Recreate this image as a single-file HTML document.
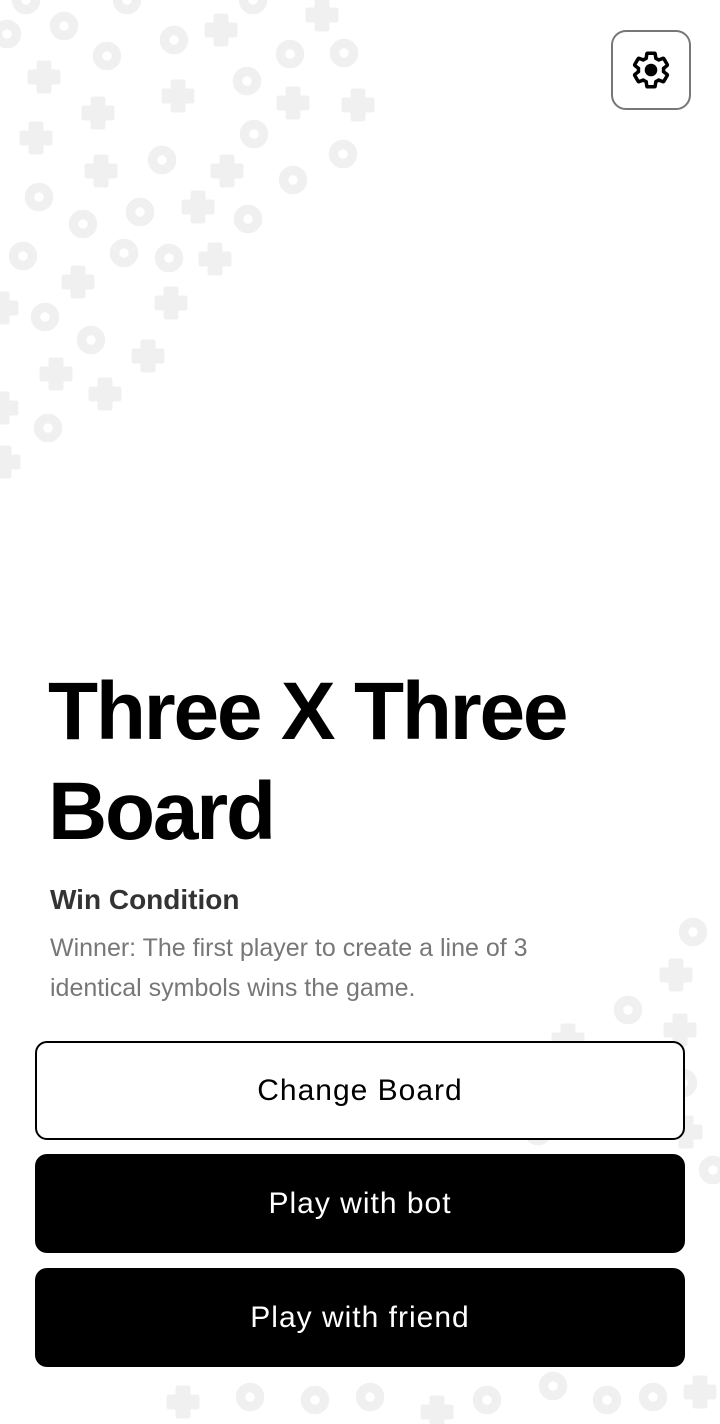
<!DOCTYPE html>
<html><head><meta charset="utf-8"><style>
html,body{margin:0;padding:0}
body{width:720px;height:1424px;position:relative;background:#fff;overflow:hidden;font-family:"Liberation Sans",sans-serif}
svg.bg{position:absolute;left:0;top:0}
.gear{position:absolute;left:611px;top:30px;width:76px;height:76px;border:2px solid #777;border-radius:15px;background:#fff;display:flex;align-items:center;justify-content:center}
h1{position:absolute;left:48px;top:662px;margin:0;font-size:82px;line-height:100px;font-weight:bold;letter-spacing:-2.2px;color:#000}
.wc{position:absolute;left:50px;top:884px;font-size:28px;font-weight:bold;color:#333}
.desc{position:absolute;left:50px;top:928px;width:545px;font-size:25px;line-height:40px;color:#777}
.btn{position:absolute;left:35px;width:650px;height:99px;border-radius:12px;box-sizing:border-box;display:flex;align-items:center;justify-content:center;font-size:30px;letter-spacing:1px}
.o{border:2px solid #000;background:#fff;color:#000}
.f{background:#000;color:#fff}
</style></head><body>
<svg class="bg" width="720" height="1424">
<defs>
<g id="r"><circle r="9.5" fill="none" stroke="#f0f0f0" stroke-width="9.5"/></g>
<g id="p"><path d="M-5,-15h10a1,1 0 0 1 1,1v8h8a1,1 0 0 1 1,1v10a1,1 0 0 1 -1,1h-8v8a1,1 0 0 1 -1,1h-10a1,1 0 0 1 -1,-1v-8h-8a1,1 0 0 1 -1,-1v-10a1,1 0 0 1 1,-1h8v-8a1,1 0 0 1 1,-1z" fill="#f0f0f0" stroke="#f0f0f0" stroke-width="3" stroke-linejoin="round"/></g>
</defs>
<g>
<use href="#r" x="26" y="0"/><use href="#r" x="127" y="0"/><use href="#r" x="253" y="0"/>
<use href="#r" x="7" y="34"/><use href="#r" x="64" y="26"/><use href="#r" x="107" y="56"/><use href="#r" x="174" y="40"/><use href="#r" x="290" y="54"/><use href="#r" x="344" y="53"/><use href="#r" x="247" y="81"/><use href="#r" x="254" y="134"/><use href="#r" x="343" y="154"/><use href="#r" x="162" y="160"/><use href="#r" x="39" y="197"/><use href="#r" x="83" y="224"/><use href="#r" x="140" y="212"/><use href="#r" x="293" y="180"/><use href="#r" x="248" y="219"/><use href="#r" x="23" y="256"/><use href="#r" x="124" y="253"/><use href="#r" x="169" y="258"/><use href="#r" x="45" y="317"/><use href="#r" x="91" y="340"/><use href="#r" x="48" y="428"/>
<use href="#p" x="44" y="77"/><use href="#p" x="221" y="30"/><use href="#p" x="322" y="15"/><use href="#p" x="178" y="96"/><use href="#p" x="98" y="113"/><use href="#p" x="36" y="138"/><use href="#p" x="293" y="103"/><use href="#p" x="358" y="105"/><use href="#p" x="101" y="171"/><use href="#p" x="227" y="171"/><use href="#p" x="198" y="207"/><use href="#p" x="215" y="259"/><use href="#p" x="78" y="282"/><use href="#p" x="171" y="303"/><use href="#p" x="148" y="356"/><use href="#p" x="56" y="374"/><use href="#p" x="105" y="394"/><use href="#p" x="2" y="308"/><use href="#p" x="2" y="408"/><use href="#p" x="4" y="462"/>
<use href="#r" x="693" y="932"/><use href="#r" x="628" y="1010"/><use href="#r" x="578" y="1093"/><use href="#r" x="538" y="1131"/><use href="#r" x="622" y="1120"/><use href="#r" x="683" y="1083"/><use href="#r" x="713" y="1170"/>
<use href="#r" x="250" y="1397"/><use href="#r" x="315" y="1400"/><use href="#r" x="370" y="1397"/><use href="#r" x="487" y="1400"/><use href="#r" x="553" y="1386"/><use href="#r" x="607" y="1400"/><use href="#r" x="653" y="1397"/>
<use href="#p" x="676" y="975"/><use href="#p" x="680" y="1030"/><use href="#p" x="568" y="1040"/><use href="#p" x="608" y="1062"/><use href="#p" x="523" y="1076"/><use href="#p" x="496" y="1120"/><use href="#p" x="686" y="1132"/>
<use href="#p" x="183" y="1402"/><use href="#p" x="437" y="1412"/><use href="#p" x="700" y="1392"/>
</g>
</svg>
<div class="gear"><svg width="42" height="42" viewBox="0 0 24 24"><path fill="none" stroke="#000" stroke-width="2" stroke-linejoin="round" d="M19.14 12.94c.04-.3.06-.61.06-.94s-.02-.64-.07-.94l2.03-1.58a.49.49 0 0 0 .12-.61l-1.92-3.32a.49.49 0 0 0-.59-.22l-2.39.96c-.5-.38-1.03-.7-1.62-.94l-.36-2.54a.48.48 0 0 0-.48-.41h-3.84c-.24 0-.43.17-.47.41l-.36 2.54c-.59.24-1.130.57-1.62.94l-2.39-.96a.48.48 0 0 0-.59.22L2.74 8.87c-.12.21-.08.47.12.61l2.03 1.58c-.05.3-.09.63-.09.94s.02.64.07.94l-2.03 1.58a.49.49 0 0 0-.12.61l1.92 3.32c.12.22.37.29.59.22l2.39-.96c.5.38 1.03.7 1.62.94l.36 2.54c.05.24.24.41.48.41h3.84c.24 0 .44-.17.47-.41l.36-2.54c.59-.24 1.13-.56 1.62-.94l2.39.96c.22.08.47 0 .59-.22l1.92-3.32c.12-.22.07-.47-.12-.61l-2.01-1.58z"/><circle cx="12" cy="12" r="3.6" fill="#000"/></svg></div>
<h1>Three X Three<br>Board</h1>
<div class="wc">Win Condition</div>
<div class="desc">Winner: The first player to create a line of 3 identical symbols wins the game.</div>
<div class="btn o" style="top:1041px">Change Board</div>
<div class="btn f" style="top:1154px">Play with bot</div>
<div class="btn f" style="top:1268px">Play with friend</div>
</body></html>
